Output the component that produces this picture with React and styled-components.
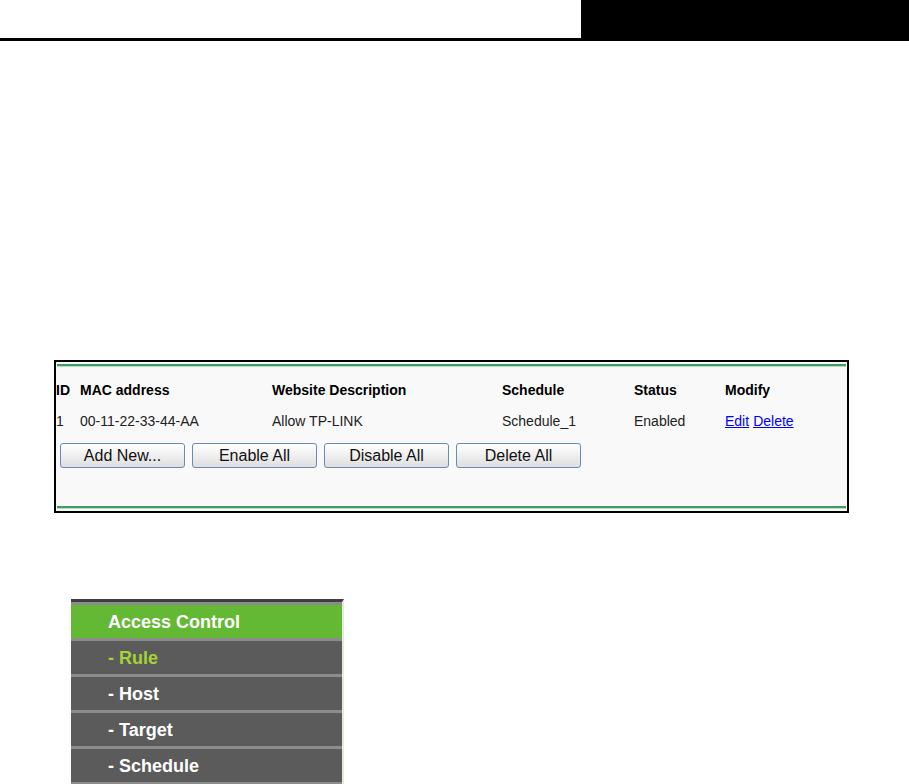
import React from 'react';
import styled, { createGlobalStyle } from 'styled-components';

const GlobalStyle = createGlobalStyle`
  html, body {
    margin: 0;
    padding: 0;
    background: #fff;
  }
  body {
    font-family: "Liberation Sans", Arial, sans-serif;
    color: #000;
  }
`;

// page header: white strip with a black block on the right, thick rule below
const Header = styled.header`
  display: flex;
  height: 38px;
  border-bottom: 3px solid #000;
`;

const HeaderBlank = styled.div`
  flex: 1;
`;

const HeaderBlock = styled.div`
  width: 328px;
  background: #000;
`;

const Page = styled.main`
  padding: 319px 0 0 54px;
`;

const RulePanel = styled.section`
  width: 791px;
  height: 147px;
  border: 2px solid #000;
  background: #f9f9f9;
  padding: 2px 0 0 0;
  display: flex;
  flex-direction: column;
`;

const GreenLine = styled.div`
  height: 2px;
  margin: 0 1px;
  background: #3f9b63;
  box-shadow: 0 1px 0 #b7dcc3;
`;

const Grid = styled.div`
  display: grid;
  grid-template-columns: 24px 192px 230px 132px 91px 1fr;
  margin-top: 15px;
`;

const Cell = styled.div`
  height: 31px;
  line-height: 18px;
  font-size: 14px;
  font-weight: ${(p) => (p.$head ? 'bold' : 'normal')};
  color: ${(p) => (p.$head ? '#000' : '#222')};
  white-space: nowrap;
`;

const Link = styled.a`
  color: #0000ff;
  text-decoration: underline;
  margin-right: 4px;
  cursor: pointer;
`;

const ButtonRow = styled.div`
  display: flex;
  gap: 7px;
  padding-left: 4px;
  margin-top: 0;
`;

const Button = styled.button`
  width: 125px;
  height: 25px;
  border: 1px solid #6a8cb3;
  border-radius: 3px;
  background: linear-gradient(#ffffff, #ececec 60%, #dedede);
  font-family: "Liberation Sans", Arial, sans-serif;
  font-size: 16px;
  color: #111;
  padding: 0;
`;

const Spacer = styled.div`
  flex: 1;
`;

const BottomLine = styled(GreenLine)`
  margin-bottom: 3px;
`;

// side menu
const Menu = styled.nav`
  margin: 86px 0 0 71px;
  width: 271px;
  border-top: 3px solid #3e3e3e;
  border-right: 2px solid #e6e8dc;
`;

const MenuItem = styled.div`
  height: 33px;
  border-top: 3px solid #8c8c8c;
  background: ${(p) => (p.$title ? '#63b933' : '#5b5b5b')};
  color: ${(p) => (p.$active ? '#a5d334' : '#fff')};
  font-size: 18px;
  font-weight: bold;
  line-height: 34px;
  padding-left: 37px;
  &:last-child {
    border-bottom: 3px solid #8c8c8c;
  }
`;

const heads = ['ID', 'MAC address', 'Website Description', 'Schedule', 'Status', 'Modify'];

export default function App() {
  return (
    <>
      <GlobalStyle />
      <Header>
        <HeaderBlank />
        <HeaderBlock />
      </Header>
      <Page>
        <RulePanel>
          <GreenLine />
          <Grid>
            {heads.map((h) => (
              <Cell key={h} $head>{h}</Cell>
            ))}
            <Cell>1</Cell>
            <Cell>00-11-22-33-44-AA</Cell>
            <Cell>Allow TP-LINK</Cell>
            <Cell>Schedule_1</Cell>
            <Cell>Enabled</Cell>
            <Cell>
              <Link>Edit</Link>
              <Link>Delete</Link>
            </Cell>
          </Grid>
          <ButtonRow>
            <Button>Add New...</Button>
            <Button>Enable All</Button>
            <Button>Disable All</Button>
            <Button>Delete All</Button>
          </ButtonRow>
          <Spacer />
          <BottomLine />
        </RulePanel>
      </Page>
      <Menu>
        <MenuItem $title>Access Control</MenuItem>
        <MenuItem $active>- Rule</MenuItem>
        <MenuItem>- Host</MenuItem>
        <MenuItem>- Target</MenuItem>
        <MenuItem>- Schedule</MenuItem>
      </Menu>
    </>
  );
}
